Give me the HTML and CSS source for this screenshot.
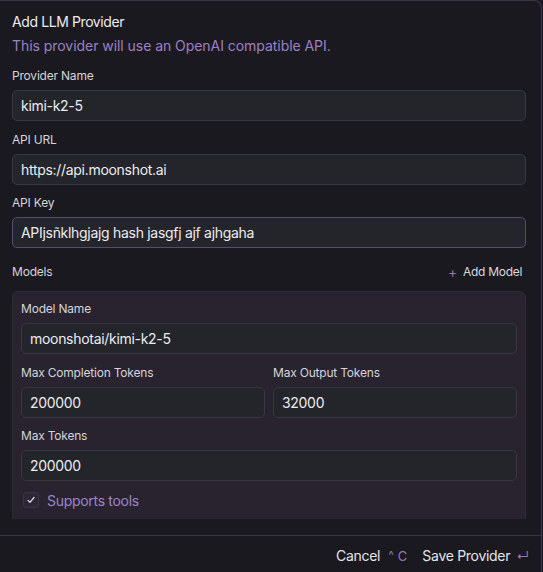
FILE: index.html
```html
<!DOCTYPE html>
<html>
<head>
<meta charset="utf-8">
<link rel="stylesheet" href="styles.css">
</head>
<body>
<div class="dialog">
  <div class="scroll">
    <div class="title">Add LLM Provider</div>
    <div class="subtitle">This provider will use an OpenAI compatible API.</div>
    <div class="field">
      <div class="label">Provider Name</div>
      <div class="input">kimi-k2-5</div>
    </div>
    <div class="field">
      <div class="label">API URL</div>
      <div class="input">https://api.moonshot.ai</div>
    </div>
    <div class="field">
      <div class="label">API Key</div>
      <div class="input focused">APIjsñklhgjajg hash jasgfj ajf ajhgaha</div>
    </div>
    <div class="models-row">
      <span class="label-plain">Models</span>
      <span class="add-model"><span class="plus">+</span>Add Model</span>
    </div>
    <div class="panel">
      <div class="field first">
        <div class="label">Model Name</div>
        <div class="input">moonshotai/kimi-k2-5</div>
      </div>
      <div class="grid2">
        <div class="field">
          <div class="label">Max Completion Tokens</div>
          <div class="input">200000</div>
        </div>
        <div class="field">
          <div class="label">Max Output Tokens</div>
          <div class="input">32000</div>
        </div>
      </div>
      <div class="field">
        <div class="label">Max Tokens</div>
        <div class="input">200000</div>
      </div>
      <div class="check-row">
        <span class="checkbox">
          <svg width="10" height="10" viewBox="0 0 10 10"><path d="M2 5.3 L4 7.3 L8 2.5" fill="none" stroke="#e4dcf0" stroke-width="1.2" stroke-linecap="round" stroke-linejoin="round"/></svg>
        </span>
        <span class="check-label">Supports tools</span>
      </div>
    </div>
  </div>
  <div class="footer">
    <span class="btn">Cancel</span>
    <span class="kbd"><span class="caret">^</span>C</span>
    <span class="btn save">Save Provider</span>
    <span class="kbd enter">↵</span>
  </div>
</div>
</body>
</html>
```

FILE: styles.css
```css
html, body {
  margin: 0;
  padding: 0;
  background: #1b1920;
}
body {
  font-family: Inter, "Noto Sans", sans-serif;
  color: #e4e4e8;
  width: 543px;
  height: 572px;
  overflow: hidden;
}
.dialog {
  box-sizing: border-box;
  width: 542px;
  height: 600px;
  background: #1b1920;
  border-top: 1px solid #3a3548;
  border-right: 1px solid #3a3548;
  border-top-right-radius: 8px;
  display: flex;
  flex-direction: column;
}
.scroll {
  height: 518px;
  overflow: hidden;
  padding: 11px 15px 0 12px;
  box-sizing: border-box;
  margin-bottom: 16px;
  flex: none;
}
.title {
  font-size: 14px;
  line-height: 20px;
  letter-spacing: -0.4px;
  color: #ececf0;
}
.subtitle {
  margin-top: 4px;
  font-size: 14px;
  line-height: 20px;
  color: #9c80c4;
  letter-spacing: -0.05px;
}
.field {
  margin-top: 10.5px;
}
.subtitle + .field {
  margin-top: 12px;
}
.field.first {
  margin-top: 0;
}
.label, .label-plain {
  font-size: 12px;
  line-height: 16px;
  color: #d4d4da;
  letter-spacing: -0.2px;
}
.label {
  margin-bottom: 6px;
}
.input {
  box-sizing: border-box;
  height: 31px;
  border: 1px solid #383843;
  border-radius: 5px;
  background: #23252b;
  padding: 0 8px;
  font-size: 14px;
  line-height: 29px;
  color: #ececf0;
  letter-spacing: -0.3px;
  white-space: nowrap;
  overflow: hidden;
}
.input.focused {
  border-color: #574d6c;
}
.models-row {
  margin-top: 16px;
  display: flex;
  justify-content: space-between;
  align-items: center;
  height: 16px;
  padding-right: 4px;
}
.add-model {
  font-size: 12px;
  line-height: 16px;
  color: #d8d8de;
  display: flex;
  align-items: center;
  letter-spacing: -0.3px;
}
.plus {
  color: #8a78a8;
  font-size: 14px;
  margin-right: 6px;
}
.panel {
  margin-top: 11px;
  background: #28232f;
  border: 1px solid #2f2a38;
  border-radius: 6px;
  padding: 9px 8px 40px 8px;
}
.grid2 {
  display: grid;
  grid-template-columns: 1fr 1fr;
  column-gap: 8px;
}
.check-row {
  margin-top: 11px;
  display: flex;
  align-items: center;
  padding-left: 2px;
  height: 16px;
}
.checkbox {
  box-sizing: border-box;
  width: 16px;
  height: 16px;
  border: 1px solid #3b3448;
  border-radius: 3px;
  background: #2c2636;
  display: flex;
  align-items: center;
  justify-content: center;
  margin-right: 8px;
}
.check-label {
  font-size: 14px;
  color: #9e84c8;
  letter-spacing: -0.3px;
}
.footer {
  border-top: 1px solid #3a3548;
  display: flex;
  justify-content: flex-end;
  align-items: center;
  padding: 10px 12px 0 0;
  height: 20px;
  font-size: 14px;
  line-height: 20px;
}
.btn {
  color: #e4e4e8;
  letter-spacing: -0.3px;
}
.kbd {
  color: #8f77b8;
  font-size: 13px;
  margin-left: 8px;
}
.caret {
  font-size: 12px;
  margin-right: 4px;
  position: relative;
  top: -2px;
}
.save {
  margin-left: 15px;
}
.enter {
  margin-left: 6px;
}
```
